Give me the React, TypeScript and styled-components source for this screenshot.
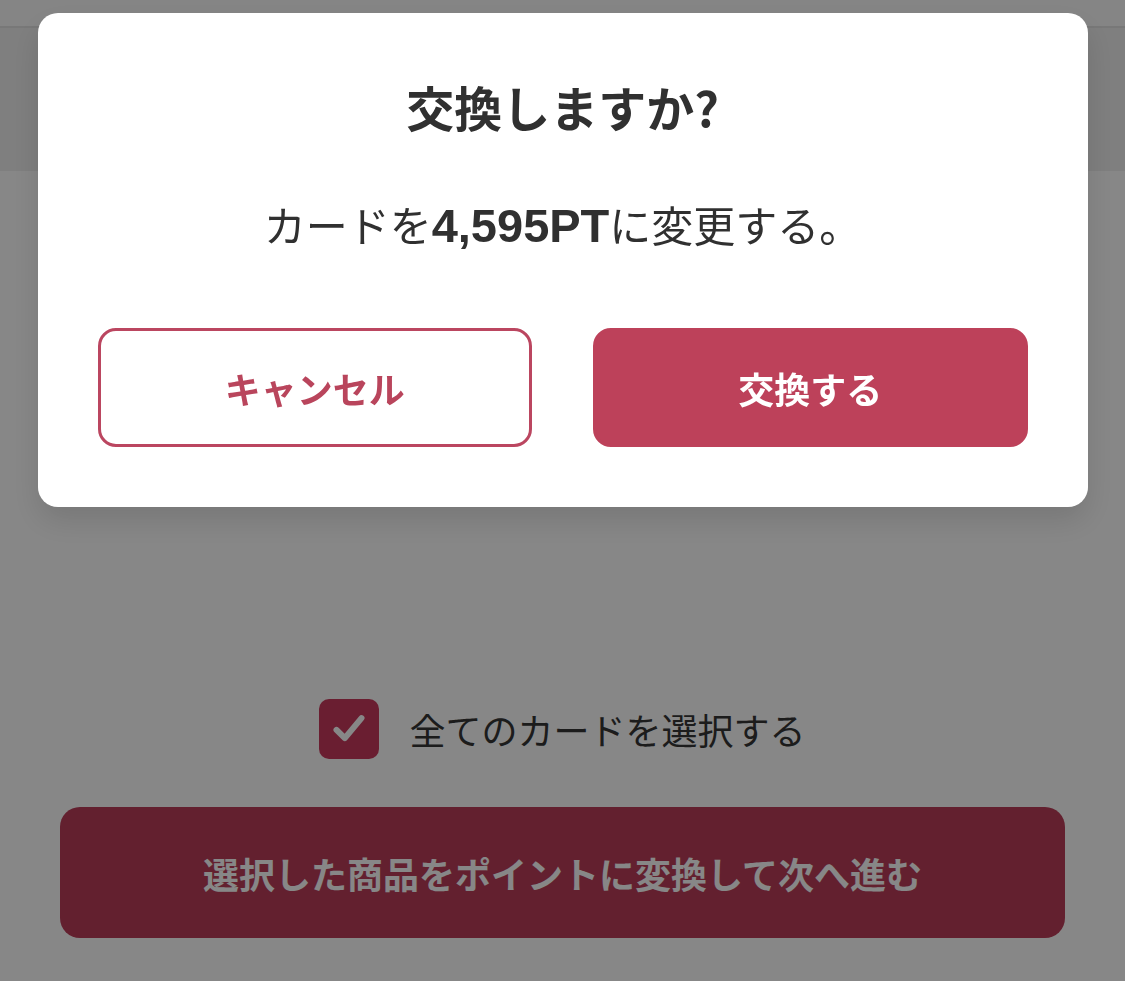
import React from 'react';
import styled, { createGlobalStyle } from 'styled-components';

const GlobalStyle = createGlobalStyle`
  html, body {
    margin: 0;
    padding: 0;
  }
  body {
    font-family: "Noto Sans CJK JP", "Noto Sans", sans-serif;
    color: #333;
  }
  * {
    box-sizing: border-box;
  }
`;

const Page = styled.div`
  min-height: 981px;
  background: #fff;
  display: flex;
  flex-direction: column;
`;

const TopStrip = styled.div`
  height: 28px;
  background: #fbfbfb;
  border-bottom: 2px solid #e2e2e2;
`;

const Header = styled.header`
  height: 143px;
  background: #f0f0f0;
`;

const CardList = styled.section`
  height: 528px;
`;

const SelectAllRow = styled.label`
  display: flex;
  align-items: center;
  justify-content: center;
  gap: 30px;
  font-size: 36px;
  line-height: 60px;
  color: #363636;
`;

const CheckBox = styled.span`
  width: 60px;
  height: 60px;
  border-radius: 10px;
  background: #c93a5e;
  display: flex;
  align-items: center;
  justify-content: center;
`;

const SubmitButton = styled.button`
  margin: 48px 60px 0;
  height: 131px;
  border: none;
  border-radius: 20px;
  background: #bb3d59;
  color: #fff;
  font-family: inherit;
  font-size: 36px;
  font-weight: 700;
`;

const Overlay = styled.div`
  position: fixed;
  inset: 0;
  background: rgba(0, 0, 0, 0.47);
  display: flex;
  justify-content: center;
  align-items: flex-start;
  padding-top: 13px;
`;

const Dialog = styled.div`
  width: 1050px;
  background: #fff;
  border-radius: 20px;
  padding: 61px 60px 60px;
  text-align: center;
  box-shadow: 0 14px 30px rgba(0, 0, 0, 0.12);
`;

const Title = styled.h2`
  margin: 0;
  font-size: 48px;
  line-height: 64px;
  font-weight: 700;
  color: #303030;
`;

const Message = styled.p`
  margin: 57px 0 0;
  font-size: 42px;
  line-height: 58px;
  color: #303030;

  > strong {
    font-family: "Liberation Sans", Arial, sans-serif;
    font-size: 47px;
    font-weight: 700;
  }
`;

const Actions = styled.div`
  margin-top: 73px;
  display: grid;
  grid-template-columns: 1fr 1fr;
  gap: 61px;
`;

const ActionButton = styled.button<{ $primary?: boolean }>`
  height: 119px;
  border-radius: 18px;
  border: 3px solid;
  background: ${(p) => (p.$primary ? '#bd415a' : '#fff')};
  border-color: ${(p) => (p.$primary ? '#bd415a' : '#bb4660')};
  color: ${(p) => (p.$primary ? '#fff' : '#b9455c')};
  font-family: inherit;
  font-size: 36px;
  font-weight: 700;
`;

export default function App() {
  return (
    <>
      <GlobalStyle />
      <Page>
        <TopStrip />
        <Header />
        <CardList />
        <SelectAllRow>
          <CheckBox>
            <svg width="40" height="40" viewBox="0 0 24 24" fill="none">
              <polyline
                points="4.5,12.5 9.5,17.5 19.5,5.5"
                stroke="#fff"
                strokeWidth="3.6"
                strokeLinecap="round"
                strokeLinejoin="round"
              />
            </svg>
          </CheckBox>
          全てのカードを選択する
        </SelectAllRow>
        <SubmitButton>選択した商品をポイントに変換して次へ進む</SubmitButton>
      </Page>
      <Overlay>
        <Dialog>
          <Title>交換しますか?</Title>
          <Message>
            カードを<strong>4,595PT</strong>に変更する。
          </Message>
          <Actions>
            <ActionButton>キャンセル</ActionButton>
            <ActionButton $primary>交換する</ActionButton>
          </Actions>
        </Dialog>
      </Overlay>
    </>
  );
}
